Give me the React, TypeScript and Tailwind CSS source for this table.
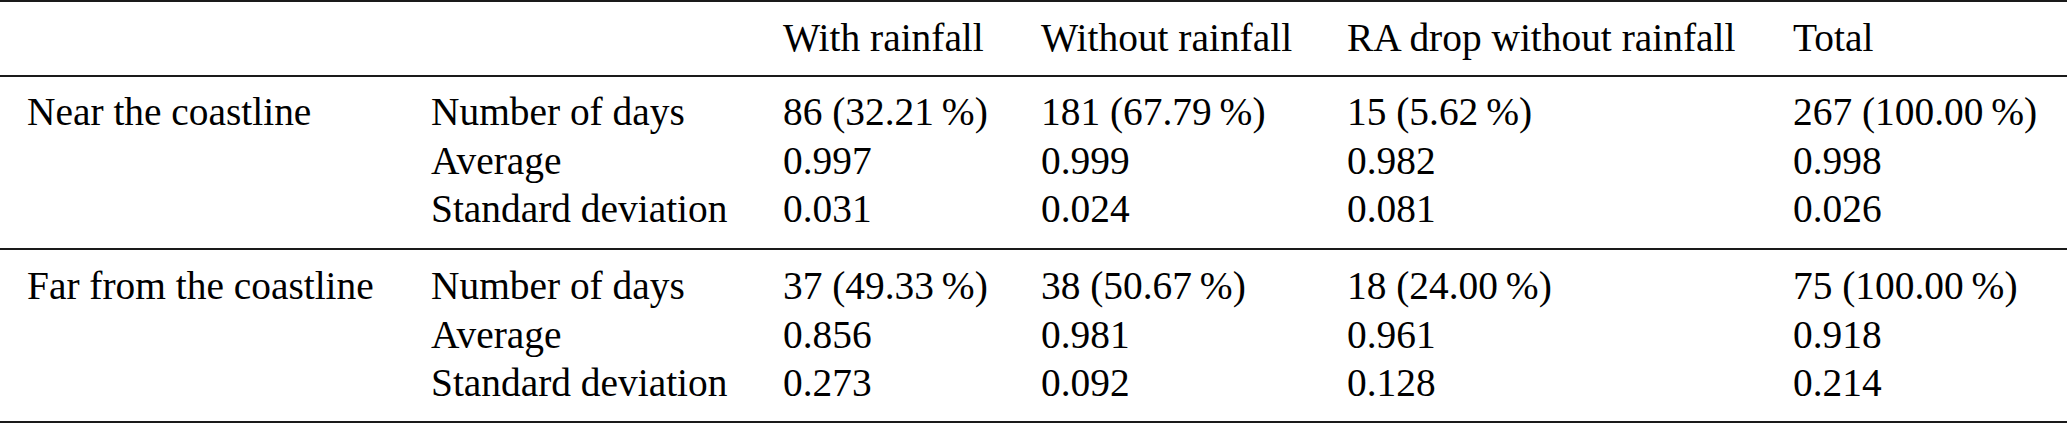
import React from "react";

const cols = "grid grid-cols-[404px_352px_258px_306px_446px_1fr] pl-[27px]";

type Group = {
  name: string;
  rows: string[][];
};

const groups: Group[] = [
  {
    name: "Near the coastline",
    rows: [
      ["Number of days", "86 (32.21\u2009%)", "181 (67.79\u2009%)", "15 (5.62\u2009%)", "267 (100.00\u2009%)"],
      ["Average", "0.997", "0.999", "0.982", "0.998"],
      ["Standard deviation", "0.031", "0.024", "0.081", "0.026"],
    ],
  },
  {
    name: "Far from the coastline",
    rows: [
      ["Number of days", "37 (49.33\u2009%)", "38 (50.67\u2009%)", "18 (24.00\u2009%)", "75 (100.00\u2009%)"],
      ["Average", "0.856", "0.981", "0.961", "0.918"],
      ["Standard deviation", "0.273", "0.092", "0.128", "0.214"],
    ],
  },
];

function GroupRows({ g, className }: { g: Group; className: string }) {
  return (
    <div className={`${cols} ${className}`}>
      {g.rows.map((r, i) => (
        <React.Fragment key={i}>
          <div className="whitespace-nowrap">{i === 0 ? g.name : null}</div>
          {r.map((c, j) => (
            <div key={j} className="whitespace-nowrap">
              {c}
            </div>
          ))}
        </React.Fragment>
      ))}
    </div>
  );
}

export default function App() {
  return (
    <div
      className="w-[2067px] h-[424px] overflow-hidden bg-white text-black text-[39.4px] leading-[48.3px]"
      style={{ fontFamily: '"Liberation Serif", "Times New Roman", serif' }}
    >
      <div className="h-[2px] bg-[#1a1a1a]" />
      <div className={`${cols} pt-[11.5px] pb-[13.7px]`}>
        <div />
        <div />
        <div className="whitespace-nowrap">With rainfall</div>
        <div className="whitespace-nowrap">Without rainfall</div>
        <div className="whitespace-nowrap">RA drop without rainfall</div>
        <div className="whitespace-nowrap">Total</div>
      </div>
      <div className="h-[1.5px] bg-[#1a1a1a]" />
      <GroupRows g={groups[0]} className="pt-[11.5px] pb-[15.1px]" />
      <div className="h-[1.5px] bg-[#1a1a1a]" />
      <GroupRows g={groups[1]} className="pt-[12.5px] pb-[14.1px]" />
      <div className="h-[2px] bg-[#1a1a1a]" />
    </div>
  );
}
